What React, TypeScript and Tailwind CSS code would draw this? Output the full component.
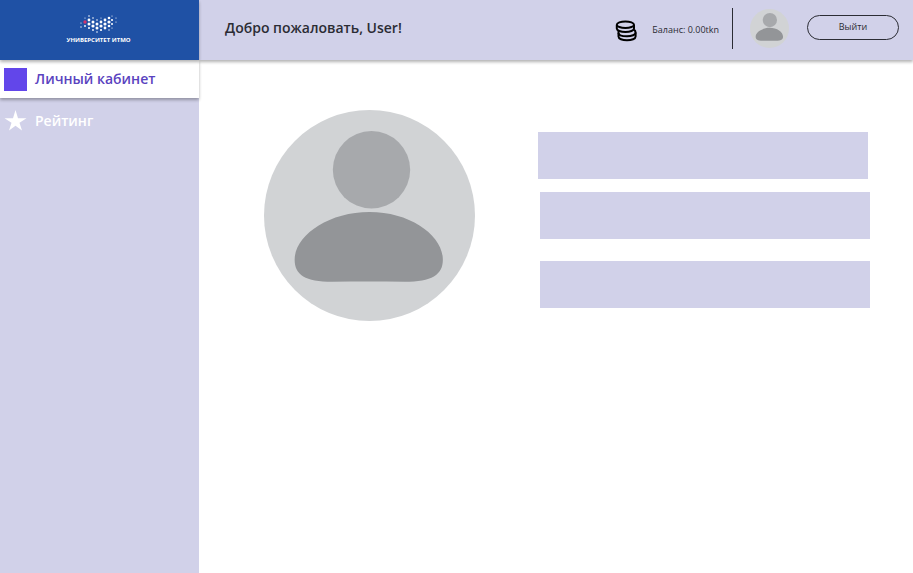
type Dot = [number, number, number];

const logoDots: Dot[] = [
  [4, 10, 0.6], [4, 14, 0.7], [8, 5, 0.6], [8, 13, 0.9],
  [12, 3, 0.8], [12, 7, 1.4], [12, 11, 1.5], [12, 15, 1],
  [16, 5, 0.8], [16, 9, 1.5], [16, 13, 1.6], [16, 17, 0.9],
  [20, 7, 0.8], [20, 11, 1.5], [20, 15, 1.5], [20, 19, 0.8],
  [24, 5, 0.6], [24, 9, 1.4], [24, 13, 1.6], [24, 17, 1.1],
  [28, 7, 1.4], [28, 11, 1.6], [28, 15, 1.4],
  [32, 5, 1.3], [32, 9, 1.6], [32, 13, 1.3], [32, 17, 0.7],
  [35, 3, 0.6], [35, 7, 1.1], [35, 11, 1], [35, 15, 0.6],
  [39, 5, 0.6], [39, 9, 0.6],
];

function Logo() {
  return (
    <a
      href="#"
      className="relative z-10 flex h-[60px] flex-col items-center bg-[#1f51a5] pt-[13px] pr-0.5 text-white shadow-[0_2px_3px_rgba(0,0,0,0.3)]"
    >
      <svg viewBox="0 0 44 22" className="h-[22px] w-11" aria-hidden="true">
        {logoDots.map(([x, y, r]) => (
          <circle key={`${x}-${y}`} cx={x} cy={y} r={r} fill="#fff" />
        ))}
        <circle cx="8" cy="9" r="1.7" fill="#d0346c" />
      </svg>
      <span className="text-[6px] leading-[10px] font-bold">УНИВЕРСИТЕТ ИТМО</span>
    </a>
  );
}

function Avatar({ className }: { className: string }) {
  return (
    <svg viewBox="0 0 210 210" className={className} role="img" aria-label="User">
      <circle cx="105" cy="105" r="105" fill="#d1d3d5" />
      <circle cx="107" cy="59.5" r="38.5" fill="#a7a9ac" />
      <path
        d="M105 101.500C146 101.500 178 125 178 149C178 164 167 171 140 171C116 170.500 92 170.500 68 171C41 171 30.500 164 30.500 149C30.500 125 64 101.500 105 101.500Z"
        fill="#939598"
      />
    </svg>
  );
}

function Coins() {
  return (
    <svg viewBox="0 0 24 24" className="mt-1.5 size-6" fill="none" stroke="#000" strokeWidth="2" aria-hidden="true">
      <ellipse cx="11.4" cy="5.7" rx="8.6" ry="3.2" />
      <path d="M2.8 6V9.500C2.800 11.500 6.600 13 11.400 13S20 11.500 20 9.500V6" />
      <path d="M4.500 12V14C4.500 16 8.300 17.300 13 17.300S21.600 15.800 21.600 13.800C21.600 12.400 21 11.400 20 10.600" />
      <path d="M4.500 14V17.500C4.500 19.700 8.300 21.300 13 21.300S21.600 19.700 21.600 17.500V13.500" />
    </svg>
  );
}

export default function App() {
  return (
    <div className="flex min-h-screen bg-white font-['Open_Sans','Noto_Sans',sans-serif]">
      <aside className="w-[199px] shrink-0 bg-[#d1d1e9]">
        <Logo />
        <nav className="text-sm font-semibold">
          <a
            href="#"
            aria-current="page"
            className="flex h-[38px] items-center gap-2 bg-white px-1 text-[#5a43c0] shadow-[0_2px_3px_rgba(0,0,0,0.3)]"
          >
            <span className="size-[23px] bg-[#6246ea]" />
            Личный кабинет
          </a>
          <a href="#" className="flex h-[46px] items-center gap-2 px-1 text-white">
            <svg viewBox="0 0 23 23" className="size-[23px]" fill="currentColor" aria-hidden="true">
              <path d="M11.500 0L14 8.200H22.500L15.500 12.800L18 20.500L11.500 15.700L5 20.500L7.500 12.800L0.500 8.200H9Z" />
            </svg>
            Рейтинг
          </a>
        </nav>
      </aside>
      <div className="min-w-0 flex-1">
        <header className="flex h-[60px] items-center bg-[#d1d1e9] pr-3.5 pb-1 pl-[26px] text-[#2b2c34] shadow-[0_2px_3px_rgba(0,0,0,0.3)]">
          <h1 className="mr-auto text-sm font-semibold">Добро пожаловать, User!</h1>
          <Coins />
          <p className="mt-1 ml-3.5 text-[9px]">Баланс: 0.00tkn</p>
          <div className="ml-[13px] h-[41px] w-px bg-[#2b2c34]" />
          <Avatar className="ml-[17px] size-[39px]" />
          <button
            type="button"
            className="mb-0.5 ml-[18px] h-[25px] w-[92px] rounded-full border border-[#2b2c34] text-[9px]"
          >
            Выйти
          </button>
        </header>
        <main className="flex items-start justify-between pt-[50px] pr-[43px] pl-[65px]">
          <Avatar className="size-[211px] shrink-0" />
          <div className="w-[332px] pt-[22px]">
            <div className="mr-0.5 h-[47px] bg-[#d1d1e9]" />
            <div className="mt-[13px] ml-0.5 h-[47px] bg-[#d1d1e9]" />
            <div className="mt-[22px] ml-0.5 h-[47px] bg-[#d1d1e9]" />
          </div>
        </main>
      </div>
    </div>
  );
}
